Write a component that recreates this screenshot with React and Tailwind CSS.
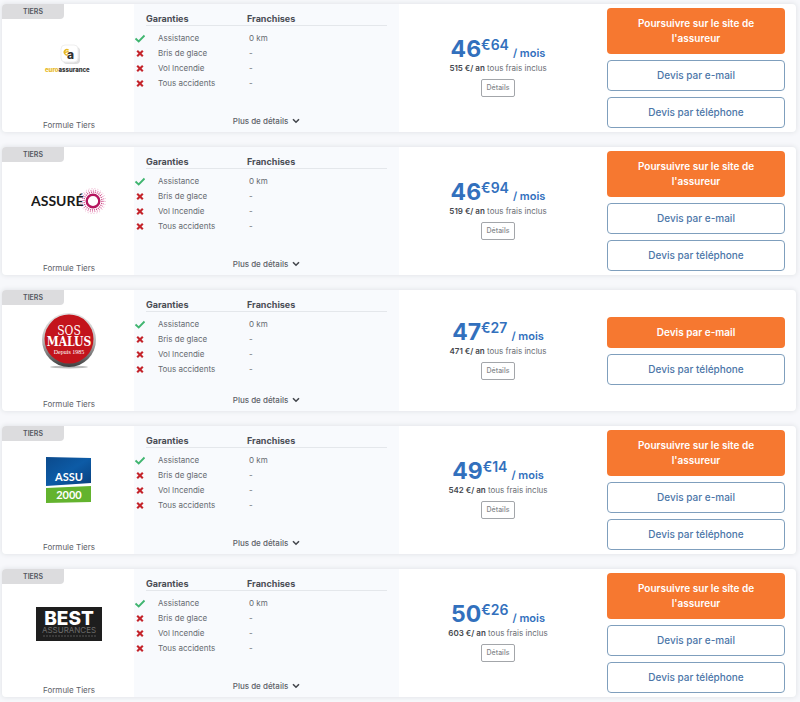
function EuroAssurance() {
  return (
    <svg width="52" height="32" viewBox="0 0 52 32" role="img" aria-label="euro assurance">
      <rect x="20" y="4" width="17" height="17" rx="4" fill="#dedede" />
      <rect x="18" y="2" width="17" height="17" rx="4" fill="#fff" stroke="#efefef" strokeWidth="1" />
      <path d="M25.5 7.2A2.6 2.6 0 1 0 25 11.6M21.5 9.6 25.6 8.4" fill="none" stroke="#e8b822" strokeWidth="1.5" />
      <text x="24" y="16" fontSize="12" className="font-['Inter'] font-extrabold" fill="#333">a</text>
      <text x="2" y="29" fontSize="6" className="font-['Inter'] font-extrabold" fill="#e8b822">
        euro<tspan fill="#333">assurance</tspan>
      </text>
    </svg>
  );
}

function Assureo() {
  return (
    <svg width="76" height="30" viewBox="0 0 76 30" role="img" aria-label="Assuréo">
      <circle cx="62" cy="14" r="12.5" fill="none" stroke="#efb5d0" strokeWidth="1" strokeDasharray="1 2" />
      <circle cx="62" cy="14" r="10.8" fill="none" stroke="#e07fae" strokeWidth="1.2" strokeDasharray="1 1.4" />
      <circle cx="62" cy="14" r="9" fill="none" stroke="#c93a7e" strokeWidth="1.3" strokeDasharray="1 1" />
      <circle cx="62" cy="14" r="6.3" fill="#fff" stroke="#b5175f" strokeWidth="2.4" />
      <text x="0" y="19" fontSize="14" className="font-['Lato'] font-bold" fill="#1a1a1a">ASSURÉ</text>
    </svg>
  );
}

function SosMalus() {
  return (
    <svg width="56" height="58" viewBox="0 0 56 58" role="img" aria-label="SOS Malus, depuis 1985">
      <defs>
        <linearGradient id="rim" x1="0" y1="0" x2="0" y2="1">
          <stop offset="0" stopColor="#e4e4e4" />
          <stop offset="0.5" stopColor="#bdbdbd" />
          <stop offset="1" stopColor="#3c3c3c" />
        </linearGradient>
      </defs>
      <ellipse cx="28" cy="55" rx="19" ry="1.5" fill="#bbb" />
      <circle cx="28" cy="28" r="27" fill="url(#rim)" />
      <circle cx="28" cy="27" r="24.5" fill="#c3141c" />
      <g fill="#fff" textAnchor="middle">
        <text x="28" y="23" fontSize="12" className="font-['DejaVu_Serif_Condensed']">SOS</text>
        <text x="28" y="34" fontSize="12" className="font-['DejaVu_Serif_Condensed'] font-bold">MALUS</text>
        <text x="28" y="42" fontSize="6" className="font-['Liberation_Serif']">Depuis 1985</text>
      </g>
    </svg>
  );
}

function Assu2000() {
  return (
    <svg width="46" height="48" viewBox="0 0 46 48" role="img" aria-label="Assu 2000">
      <defs>
        <linearGradient id="sky" x1="0" y1="0" x2="1" y2="1">
          <stop offset="0" stopColor="#0b4a8c" />
          <stop offset="0.5" stopColor="#0d5ba6" />
          <stop offset="1" stopColor="#093f7d" />
        </linearGradient>
      </defs>
      <path d="M0 0 45 1V26L0 29Z" fill="url(#sky)" />
      <path d="M0 31 45 29V45L0 46Z" fill="#63b32e" />
      <g fill="#fff" textAnchor="middle" className="font-['Lato'] font-bold">
        <text x="23" y="24" fontSize="11">ASSU</text>
        <text x="23" y="42" fontSize="11">2000</text>
      </g>
    </svg>
  );
}

function BestAssurances() {
  return (
    <svg width="66" height="34" viewBox="0 0 66 34" role="img" aria-label="Best Assurances">
      <rect width="66" height="34" fill="#1e1e1e" />
      <text x="33" y="18" fontSize="19" textAnchor="middle" className="font-['Inter'] font-extrabold" fill="#fff">BEST</text>
      <text x="33" y="26" fontSize="8" textAnchor="middle" className="font-['Inter']" fill="#6c6c6c">ASSURANCES</text>
      <path d="M7 29H60" stroke="#555" strokeDasharray="2 1" />
    </svg>
  );
}

const GUARANTEES = [
  { name: 'Assistance', included: true, excess: '0 km' },
  { name: 'Bris de glace', included: false, excess: '-' },
  { name: 'Vol Incendie', included: false, excess: '-' },
  { name: 'Tous accidents', included: false, excess: '-' },
];

const OFFERS = [
  { id: 'euro', Logo: EuroAssurance, euros: 46, cents: '64', yearly: 515, online: true },
  { id: 'assureo', Logo: Assureo, euros: 46, cents: '94', yearly: 519, online: true },
  { id: 'sos', Logo: SosMalus, euros: 47, cents: '27', yearly: 471, online: false },
  { id: 'assu2000', Logo: Assu2000, euros: 49, cents: '14', yearly: 542, online: true },
  { id: 'best', Logo: BestAssurances, euros: 50, cents: '26', yearly: 603, online: true },
];

function StatusIcon({ included }) {
  return included ? (
    <svg width="12" height="9" viewBox="0 0 12 9" role="img" aria-label="Inclus">
      <path d="M1.5 4.5 4.7 7.5 10.5 1.5" fill="none" stroke="#3fb56f" strokeWidth="1.8" />
    </svg>
  ) : (
    <svg width="12" height="9" viewBox="0 0 12 9" role="img" aria-label="Non inclus">
      <path d="M3.2 1.7 8.8 7.3M8.8 1.7 3.2 7.3" stroke="#c4242b" strokeWidth="2.1" />
    </svg>
  );
}

function Guarantees() {
  return (
    <div className="flex flex-col bg-[#f8fafd] pr-3">
      <table className="w-full table-fixed text-left text-[8px] text-[#666a70]">
        <thead>
          <tr className="text-[9px] leading-3 text-[#4a4d55]">
            <td className="w-3" />
            <th className="w-[101px] border-b border-[#e4e7eb] pt-[9px] font-bold">Garanties</th>
            <th className="border-b border-[#e4e7eb] pt-[9px] font-bold">Franchises</th>
          </tr>
        </thead>
        <tbody className="leading-[15px]">
          <tr className="h-[5px]" />
          {GUARANTEES.map((g) => (
            <tr key={g.name} className="h-[15px]">
              <td><StatusIcon included={g.included} /></td>
              <td className="pl-3">{g.name}</td>
              <td className="pl-0.5">{g.excess}</td>
            </tr>
          ))}
        </tbody>
      </table>
      <button className="mt-auto mb-1 flex items-center gap-1 self-center pl-3 text-[8px] leading-[14px] font-medium text-[#5d6168]">
        Plus de détails
        <svg width="8" height="6" viewBox="0 0 8 6" aria-hidden="true">
          <path d="M1 1.2 4 4.2 7 1.2" fill="none" stroke="#44474d" strokeWidth="1.6" />
        </svg>
      </button>
    </div>
  );
}

function Price({ offer }) {
  return (
    <div className="flex flex-col items-center justify-center pb-0.5">
      <p className="flex items-end font-semibold text-[#3270bd]">
        <span className="text-[23px] leading-6 font-bold">{offer.euros}</span>
        <span className="self-start text-[14px] leading-4">€{offer.cents}</span>
        <span className="pl-1 text-[11px] leading-4">/ mois</span>
      </p>
      <p className="mt-0.5 text-[8px] leading-[10px] text-[#6b6e74]">
        <b className="font-semibold text-[#44474d]">{offer.yearly} €/ an</b> tous frais inclus
      </p>
      <button className="mt-1.5 rounded-xs border border-[#a3a6aa] px-[5px] text-[7px] leading-4 font-medium text-[#85888c]">
        Détails
      </button>
    </div>
  );
}

const PRIMARY = 'rounded-sm bg-[#f67830] px-6 py-2 text-[10px] leading-[15px] font-semibold text-white';
const SECONDARY = 'rounded-sm border border-[#7f9fbd] px-6 py-[7px] text-[10px] leading-[15px] font-medium text-[#4c76a8]';

function Actions({ online }) {
  return (
    <div className="flex flex-col justify-center gap-1.5 py-1 pr-[11px] pl-2.5">
      {online && <button className={PRIMARY}>Poursuivre sur le site de l'assureur</button>}
      <button className={online ? SECONDARY : PRIMARY}>Devis par e-mail</button>
      <button className={SECONDARY}>Devis par téléphone</button>
    </div>
  );
}

function OfferCard({ offer }) {
  const { Logo } = offer;
  return (
    <article className="grid min-h-[121px] grid-cols-[132px_265px_1fr_199px] overflow-hidden rounded-sm bg-white shadow-[0_0_4px_1px_#e4e6ea]">
      <div className="flex flex-col">
        <span className="w-[62px] rounded-br-sm bg-[#dcdcde] text-center text-[7px] leading-[15px] font-semibold text-[#55585e]">
          TIERS
        </span>
        <div className="flex flex-1 items-center justify-center pb-5 pl-0.5">
          <Logo />
        </div>
        <p className="pl-0.5 text-center text-[8px] leading-[14px] text-[#5d6168]">Formule Tiers</p>
      </div>
      <Guarantees />
      <Price offer={offer} />
      <Actions online={offer.online} />
    </article>
  );
}

export default function App() {
  return (
    <main className="flex min-h-screen flex-col gap-[15px] bg-[#f7f8fb] pt-1 pr-1 pb-1 pl-0.5 font-['Inter',sans-serif]">
      {OFFERS.map((offer) => (
        <OfferCard key={offer.id} offer={offer} />
      ))}
    </main>
  );
}
